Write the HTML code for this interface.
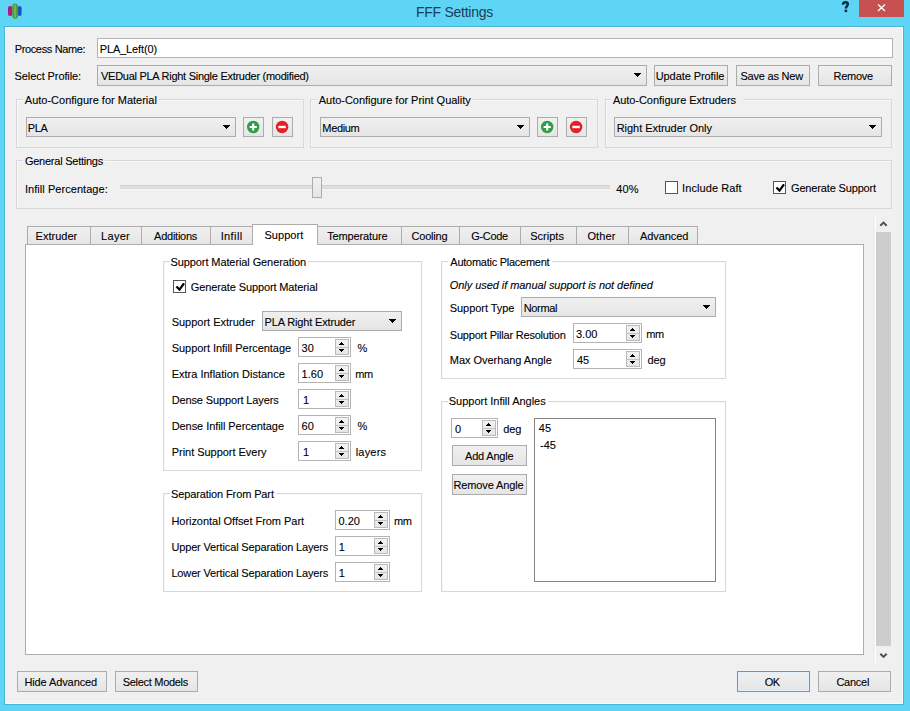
<!DOCTYPE html><html><head><meta charset="utf-8"><style>
*{box-sizing:border-box}
html,body{margin:0;padding:0}
body{width:910px;height:711px;position:relative;overflow:hidden;background:#5fd5f6;font-family:"Liberation Sans", sans-serif;font-size:11px;color:#000}
.t{position:absolute;white-space:nowrap;line-height:13px;font-size:11px;z-index:3;-webkit-text-stroke:0.1px #000}
.client{position:absolute;left:5px;top:27px;width:898px;height:677px;background:#f0f0f0;box-shadow:0 0 0 1px #4bb7d6,inset 1px 1px 0 #fbfdfd,inset -1px -1px 0 #fbfdfd}
.icon{position:absolute;left:8px;top:3px;width:14px;height:16px}
.title{position:absolute;left:0;width:910px;top:3.5px;text-align:center;font-size:14px;letter-spacing:-0.25px;line-height:16px;color:#1b3d57;text-indent:-1px}
.help{position:absolute;left:842px;top:1px;font-weight:bold;font-size:12px;color:#0d2b45}
.close{position:absolute;left:859px;top:0;width:45px;height:17px;background:#c75050}
.close svg{position:absolute;left:0;top:0}
.edit{position:absolute;background:#fff;border:1px solid #b4b4b4}
.combo{position:absolute;border:1px solid #acacac;background:linear-gradient(#f0f0f0,#e5e5e5)}
.btn{position:absolute;border:1px solid #acacac;background:linear-gradient(#f0f0f0,#e5e5e5)}
.btn.def{border-color:#5b9bd5;box-shadow:inset 0 0 0 1px #e3f0fb}
.spin{position:absolute;background:#fff;border:1px solid #b4b4b4}
.sb{position:absolute;border:1px solid #bababa;background:linear-gradient(#f2f2f2,#e6e6e6);top:1px}
.sdiv{position:absolute;left:0;right:0;height:1px;background:#c2c2c2}
.grp{position:absolute;border:1px solid #d8d8d8;box-shadow:inset 1px 1px 0 #f9f9f9}
.cb{position:absolute;width:13px;height:13px;border:1px solid #555;background:#fff}
.groove{position:absolute;border-top:1px solid #d2d2d2;border-bottom:1px solid #d8d8d8;background:#dfdfdf;box-shadow:0 1px 0 #f8f8f8}
.handle{position:absolute;border:1px solid #acacac;background:linear-gradient(#f0f0f0,#e5e5e5)}
.pane{position:absolute;background:#fff;border:1px solid #adadad}
.tab{position:absolute;border:1px solid #acacac;border-bottom:none;background:linear-gradient(#f0f0f0,#e5e5e5)}
.tabsel{position:absolute;border:1px solid #acacac;border-bottom:none;background:#fff;z-index:2}
.ar{position:absolute;shape-rendering:crispEdges;fill:#000}
.list{position:absolute;background:#fff;border:1px solid #858585}
</style></head><body><svg style="position:absolute;left:0;top:0" width="26" height="22"><rect x="8" y="6" width="4.3" height="10" rx="2" fill="#b81480"/><rect x="17.6" y="6" width="4" height="10" rx="2" fill="#1456c0"/><rect x="12.3" y="3.5" width="5.6" height="15.2" rx="2.6" fill="#4c9c3c"/><rect x="14" y="4.5" width="2" height="13" fill="#6ab848"/></svg>
<div class="title">FFF Settings</div>
<svg style="position:absolute;left:840px;top:0" width="12" height="14"><path d="M3.1 4.8 C3.1 3 4.2 2.3 5.4 2.3 C6.8 2.3 7.8 3.1 7.8 4.3 C7.8 6.2 5.9 6.3 5.9 8.6" stroke="#0d2b45" stroke-width="2.5" fill="none"/><rect x="4.6" y="9.6" width="2.6" height="2.5" fill="#0d2b45"/></svg>
<div class="close"><svg width="45" height="17"><path d="M19 4.5 L26 11 M26 4.5 L19 11" stroke="#fff" stroke-width="1.4"/></svg></div>
<div class="client"></div>
<div class="edit" style="left:97px;top:38px;width:796px;height:20px;"></div>
<div class="combo" style="left:97px;top:65px;width:550px;height:21px;"><svg class="ar" style="left:536px;top:7px" width="7" height="4"><path d="M0 0h7v1h-7zM1 1h5v1h-5zM2 2h3v1h-3zM3 3h1v1h-1z"/></svg></div>
<div class="btn" style="left:654px;top:65px;width:74px;height:21px;"></div>
<div class="btn" style="left:736px;top:65px;width:74px;height:21px;"></div>
<div class="btn" style="left:818px;top:65px;width:74px;height:21px;"></div>
<div class="grp" style="left:16px;top:99px;width:288px;height:49px;"></div>
<div style="position:absolute;left:23px;top:98px;width:136px;height:3px;background:#f0f0f0"></div>
<div class="combo" style="left:26px;top:117px;width:210px;height:20px;"><svg class="ar" style="left:196px;top:7px" width="7" height="4"><path d="M0 0h7v1h-7zM1 1h5v1h-5zM2 2h3v1h-3zM3 3h1v1h-1z"/></svg></div>
<div class="btn" style="left:243px;top:117px;width:21px;height:20px;"><svg width="21" height="20" style="position:absolute;left:-1px;top:-1px"><circle cx="10.2" cy="10" r="6.2" fill="#2e9e48"/><path d="M10.2 6.4 V13.6 M6.6 10 H13.8" stroke="#fff" stroke-width="2.2"/></svg></div>
<div class="btn" style="left:272px;top:117px;width:21px;height:20px;"><svg width="21" height="20" style="position:absolute;left:-1px;top:-1px"><circle cx="10.1" cy="10" r="6.2" fill="#e0202a"/><path d="M6.4 10 H13.8" stroke="#fff" stroke-width="2.4"/></svg></div>
<div class="grp" style="left:310px;top:99px;width:288px;height:49px;"></div>
<div style="position:absolute;left:317px;top:98px;width:156px;height:3px;background:#f0f0f0"></div>
<div class="combo" style="left:320px;top:117px;width:210px;height:20px;"><svg class="ar" style="left:196px;top:7px" width="7" height="4"><path d="M0 0h7v1h-7zM1 1h5v1h-5zM2 2h3v1h-3zM3 3h1v1h-1z"/></svg></div>
<div class="btn" style="left:537px;top:117px;width:21px;height:20px;"><svg width="21" height="20" style="position:absolute;left:-1px;top:-1px"><circle cx="10.2" cy="10" r="6.2" fill="#2e9e48"/><path d="M10.2 6.4 V13.6 M6.6 10 H13.8" stroke="#fff" stroke-width="2.2"/></svg></div>
<div class="btn" style="left:566px;top:117px;width:21px;height:20px;"><svg width="21" height="20" style="position:absolute;left:-1px;top:-1px"><circle cx="10.1" cy="10" r="6.2" fill="#e0202a"/><path d="M6.4 10 H13.8" stroke="#fff" stroke-width="2.4"/></svg></div>
<div class="grp" style="left:605px;top:99px;width:287px;height:49px;"></div>
<div style="position:absolute;left:611px;top:98px;width:132px;height:3px;background:#f0f0f0"></div>
<div class="combo" style="left:614px;top:117px;width:268px;height:20px;"><svg class="ar" style="left:254px;top:7px" width="7" height="4"><path d="M0 0h7v1h-7zM1 1h5v1h-5zM2 2h3v1h-3zM3 3h1v1h-1z"/></svg></div>
<div class="grp" style="left:16px;top:160px;width:876px;height:49px;"></div>
<div style="position:absolute;left:23px;top:159px;width:82px;height:3px;background:#f0f0f0"></div>
<div class="groove" style="left:120px;top:185px;width:490px;height:4px"></div>
<div class="handle" style="left:312px;top:177px;width:10px;height:21px"></div>
<div class="cb" style="left:665px;top:181px"></div>
<div class="cb" style="left:773px;top:181px"><svg width="13" height="13" style="position:absolute;left:-1px;top:-1px"><path d="M3.4 6.5 L6.5 9.6 L11 3.4" stroke="#000" stroke-width="2.3" fill="none"/></svg></div>
<div class="pane" style="left:25px;top:244px;width:839px;height:411px"></div>
<div class="tab" style="left:27px;top:226px;width:64px;height:18px"></div>
<div class="tab" style="left:90px;top:226px;width:52px;height:18px"></div>
<div class="tab" style="left:141px;top:226px;width:70px;height:18px"></div>
<div class="tab" style="left:210px;top:226px;width:43px;height:18px"></div>
<div class="tabsel" style="left:252px;top:224px;width:66px;height:21px"></div>
<div class="tab" style="left:317px;top:226px;width:85px;height:18px"></div>
<div class="tab" style="left:401px;top:226px;width:59px;height:18px"></div>
<div class="tab" style="left:459px;top:226px;width:62px;height:18px"></div>
<div class="tab" style="left:520px;top:226px;width:57px;height:18px"></div>
<div class="tab" style="left:576px;top:226px;width:53px;height:18px"></div>
<div class="tab" style="left:628px;top:226px;width:70px;height:18px"></div>
<div class="grp" style="left:163px;top:261px;width:259px;height:210px;"></div>
<div style="position:absolute;left:170px;top:260px;width:138px;height:3px;background:#fff"></div>
<div class="cb" style="left:173px;top:280px"><svg width="13" height="13" style="position:absolute;left:-1px;top:-1px"><path d="M3.4 6.5 L6.5 9.6 L11 3.4" stroke="#000" stroke-width="2.3" fill="none"/></svg></div>
<div class="combo" style="left:262px;top:311px;width:140px;height:20px;"><svg class="ar" style="left:126px;top:7px" width="7" height="4"><path d="M0 0h7v1h-7zM1 1h5v1h-5zM2 2h3v1h-3zM3 3h1v1h-1z"/></svg></div>
<div class="spin" style="left:298px;top:337px;width:53px;height:20px;"><div class="sb" style="left:36px;top:1px;width:14px;height:16px"><div class="sdiv" style="top:7px"></div><svg class="ar" style="left:3px;top:2px" width="5" height="3"><path d="M2 0h1v1h-1zM1 1h3v1h-3zM0 2h5v1h-5z"/></svg><svg class="ar" style="left:3px;top:9px" width="5" height="3"><path d="M0 0h5v1h-5zM1 1h3v1h-3zM2 2h1v1h-1z"/></svg></div></div>
<div class="spin" style="left:298px;top:363px;width:53px;height:20px;"><div class="sb" style="left:36px;top:1px;width:14px;height:16px"><div class="sdiv" style="top:7px"></div><svg class="ar" style="left:3px;top:2px" width="5" height="3"><path d="M2 0h1v1h-1zM1 1h3v1h-3zM0 2h5v1h-5z"/></svg><svg class="ar" style="left:3px;top:9px" width="5" height="3"><path d="M0 0h5v1h-5zM1 1h3v1h-3zM2 2h1v1h-1z"/></svg></div></div>
<div class="spin" style="left:298px;top:389px;width:53px;height:20px;"><div class="sb" style="left:36px;top:1px;width:14px;height:16px"><div class="sdiv" style="top:7px"></div><svg class="ar" style="left:3px;top:2px" width="5" height="3"><path d="M2 0h1v1h-1zM1 1h3v1h-3zM0 2h5v1h-5z"/></svg><svg class="ar" style="left:3px;top:9px" width="5" height="3"><path d="M0 0h5v1h-5zM1 1h3v1h-3zM2 2h1v1h-1z"/></svg></div></div>
<div class="spin" style="left:298px;top:415px;width:53px;height:20px;"><div class="sb" style="left:36px;top:1px;width:14px;height:16px"><div class="sdiv" style="top:7px"></div><svg class="ar" style="left:3px;top:2px" width="5" height="3"><path d="M2 0h1v1h-1zM1 1h3v1h-3zM0 2h5v1h-5z"/></svg><svg class="ar" style="left:3px;top:9px" width="5" height="3"><path d="M0 0h5v1h-5zM1 1h3v1h-3zM2 2h1v1h-1z"/></svg></div></div>
<div class="spin" style="left:298px;top:441px;width:53px;height:20px;"><div class="sb" style="left:36px;top:1px;width:14px;height:16px"><div class="sdiv" style="top:7px"></div><svg class="ar" style="left:3px;top:2px" width="5" height="3"><path d="M2 0h1v1h-1zM1 1h3v1h-3zM0 2h5v1h-5z"/></svg><svg class="ar" style="left:3px;top:9px" width="5" height="3"><path d="M0 0h5v1h-5zM1 1h3v1h-3zM2 2h1v1h-1z"/></svg></div></div>
<div class="grp" style="left:163px;top:493px;width:259px;height:99px;"></div>
<div style="position:absolute;left:170px;top:492px;width:106px;height:3px;background:#fff"></div>
<div class="spin" style="left:335px;top:510px;width:55px;height:20px;"><div class="sb" style="left:38px;top:1px;width:14px;height:16px"><div class="sdiv" style="top:7px"></div><svg class="ar" style="left:3px;top:2px" width="5" height="3"><path d="M2 0h1v1h-1zM1 1h3v1h-3zM0 2h5v1h-5z"/></svg><svg class="ar" style="left:3px;top:9px" width="5" height="3"><path d="M0 0h5v1h-5zM1 1h3v1h-3zM2 2h1v1h-1z"/></svg></div></div>
<div class="spin" style="left:335px;top:536px;width:55px;height:20px;"><div class="sb" style="left:38px;top:1px;width:14px;height:16px"><div class="sdiv" style="top:7px"></div><svg class="ar" style="left:3px;top:2px" width="5" height="3"><path d="M2 0h1v1h-1zM1 1h3v1h-3zM0 2h5v1h-5z"/></svg><svg class="ar" style="left:3px;top:9px" width="5" height="3"><path d="M0 0h5v1h-5zM1 1h3v1h-3zM2 2h1v1h-1z"/></svg></div></div>
<div class="spin" style="left:335px;top:562px;width:55px;height:20px;"><div class="sb" style="left:38px;top:1px;width:14px;height:16px"><div class="sdiv" style="top:7px"></div><svg class="ar" style="left:3px;top:2px" width="5" height="3"><path d="M2 0h1v1h-1zM1 1h3v1h-3zM0 2h5v1h-5z"/></svg><svg class="ar" style="left:3px;top:9px" width="5" height="3"><path d="M0 0h5v1h-5zM1 1h3v1h-3zM2 2h1v1h-1z"/></svg></div></div>
<div class="grp" style="left:441px;top:261px;width:285px;height:118px;"></div>
<div style="position:absolute;left:448px;top:260px;width:104px;height:3px;background:#fff"></div>
<div class="combo" style="left:521px;top:297px;width:195px;height:20px;"><svg class="ar" style="left:181px;top:7px" width="7" height="4"><path d="M0 0h7v1h-7zM1 1h5v1h-5zM2 2h3v1h-3zM3 3h1v1h-1z"/></svg></div>
<div class="spin" style="left:573px;top:323px;width:69px;height:20px;"><div class="sb" style="left:52px;top:1px;width:14px;height:16px"><div class="sdiv" style="top:7px"></div><svg class="ar" style="left:3px;top:2px" width="5" height="3"><path d="M2 0h1v1h-1zM1 1h3v1h-3zM0 2h5v1h-5z"/></svg><svg class="ar" style="left:3px;top:9px" width="5" height="3"><path d="M0 0h5v1h-5zM1 1h3v1h-3zM2 2h1v1h-1z"/></svg></div></div>
<div class="spin" style="left:573px;top:349px;width:69px;height:20px;"><div class="sb" style="left:52px;top:1px;width:14px;height:16px"><div class="sdiv" style="top:7px"></div><svg class="ar" style="left:3px;top:2px" width="5" height="3"><path d="M2 0h1v1h-1zM1 1h3v1h-3zM0 2h5v1h-5z"/></svg><svg class="ar" style="left:3px;top:9px" width="5" height="3"><path d="M0 0h5v1h-5zM1 1h3v1h-3zM2 2h1v1h-1z"/></svg></div></div>
<div class="grp" style="left:441px;top:401px;width:285px;height:191px;"></div>
<div style="position:absolute;left:448px;top:400px;width:100px;height:3px;background:#fff"></div>
<div class="spin" style="left:451px;top:418px;width:47px;height:20px;"><div class="sb" style="left:30px;top:1px;width:14px;height:16px"><div class="sdiv" style="top:7px"></div><svg class="ar" style="left:3px;top:2px" width="5" height="3"><path d="M2 0h1v1h-1zM1 1h3v1h-3zM0 2h5v1h-5z"/></svg><svg class="ar" style="left:3px;top:9px" width="5" height="3"><path d="M0 0h5v1h-5zM1 1h3v1h-3zM2 2h1v1h-1z"/></svg></div></div>
<div class="btn" style="left:452px;top:445px;width:75px;height:21px;"></div>
<div class="btn" style="left:452px;top:474px;width:75px;height:21px;"></div>
<div class="list" style="left:534px;top:418px;width:182px;height:164px"></div>
<div style="position:absolute;left:875px;top:216px;width:1px;height:448px;background:#fdfdfd"></div>
<div style="position:absolute;left:876px;top:232px;width:15px;height:414px;background:#cdcdcd"></div>
<svg style="position:absolute;left:879px;top:220px" width="10" height="8"><path d="M1.3 5.8 L4.5 2.6 L7.7 5.8" stroke="#505050" stroke-width="2" fill="none"/></svg>
<svg style="position:absolute;left:879px;top:652px" width="10" height="8"><path d="M1.3 1.7 L4.5 4.9 L7.7 1.7" stroke="#505050" stroke-width="2" fill="none"/></svg>
<div class="btn" style="left:17px;top:671px;width:90px;height:21px;"></div>
<div class="btn" style="left:115px;top:671px;width:83px;height:21px;"></div>
<div class="btn def" style="left:737px;top:671px;width:73px;height:21px;"></div>
<div class="btn" style="left:818px;top:671px;width:73px;height:21px;"></div>
<div class="t" style="left:14.65px;top:42.7px;letter-spacing:-0.350px;">Process Name:</div>
<div class="t" style="left:99.70px;top:42.7px;letter-spacing:-0.120px;">PLA_Left(0)</div>
<div class="t" style="left:14.60px;top:69.7px;letter-spacing:-0.093px;">Select Profile:</div>
<div class="t" style="left:101.00px;top:70.2px;letter-spacing:-0.274px;">VEDual PLA Right Single Extruder (modified)</div>
<div class="t" style="left:655.70px;top:69.7px;letter-spacing:-0.077px;">Update Profile</div>
<div class="t" style="left:740.40px;top:69.7px;letter-spacing:-0.200px;">Save as New</div>
<div class="t" style="left:833.60px;top:69.7px;letter-spacing:-0.300px;">Remove</div>
<div class="t" style="left:24.80px;top:93.7px;">Auto-Configure for Material</div>
<div class="t" style="left:27.70px;top:122.2px;letter-spacing:-0.350px;">PLA</div>
<div class="t" style="left:318.80px;top:93.7px;letter-spacing:-0.032px;">Auto-Configure for Print Quality</div>
<div class="t" style="left:322.32px;top:122.2px;letter-spacing:-0.350px;">Medium</div>
<div class="t" style="left:612.90px;top:93.7px;letter-spacing:-0.043px;">Auto-Configure Extruders</div>
<div class="t" style="left:616.70px;top:122.2px;letter-spacing:-0.044px;">Right Extruder Only</div>
<div class="t" style="left:24.90px;top:155.2px;letter-spacing:-0.240px;">General Settings</div>
<div class="t" style="left:25.00px;top:182.7px;letter-spacing:0.047px;">Infill Percentage:</div>
<div class="t" style="left:616.30px;top:182.7px;letter-spacing:0.100px;">40%</div>
<div class="t" style="left:682.10px;top:182.2px;letter-spacing:0.073px;">Include Raft</div>
<div class="t" style="left:791.00px;top:182.2px;letter-spacing:-0.153px;">Generate Support</div>
<div class="t" style="left:35.60px;top:229.7px;letter-spacing:0.014px;">Extruder</div>
<div class="t" style="left:101.10px;top:229.7px;letter-spacing:0.275px;">Layer</div>
<div class="t" style="left:154.10px;top:229.7px;letter-spacing:-0.250px;">Additions</div>
<div class="t" style="left:220.70px;top:229.7px;letter-spacing:0.380px;">Infill</div>
<div class="t" style="left:264.50px;top:228.7px;letter-spacing:0.033px;z-index:3">Support</div>
<div class="t" style="left:327.20px;top:229.7px;letter-spacing:-0.130px;">Temperature</div>
<div class="t" style="left:411.50px;top:229.7px;letter-spacing:-0.200px;">Cooling</div>
<div class="t" style="left:471.32px;top:229.7px;letter-spacing:-0.350px;">G-Code</div>
<div class="t" style="left:530.20px;top:229.7px;letter-spacing:0.017px;">Scripts</div>
<div class="t" style="left:587.40px;top:229.7px;letter-spacing:0.150px;">Other</div>
<div class="t" style="left:640.10px;top:229.7px;letter-spacing:-0.100px;">Advanced</div>
<div class="t" style="left:170.50px;top:255.7px;letter-spacing:-0.096px;">Support Material Generation</div>
<div class="t" style="left:190.80px;top:280.7px;letter-spacing:-0.117px;">Generate Support Material</div>
<div class="t" style="left:171.70px;top:316.2px;letter-spacing:-0.013px;">Support Extruder</div>
<div class="t" style="left:264.60px;top:316.2px;letter-spacing:-0.159px;">PLA Right Extruder</div>
<div class="t" style="left:171.70px;top:341.7px;letter-spacing:-0.042px;">Support Infill Percentage</div>
<div class="t" style="left:301.60px;top:341.7px;">30</div>
<div class="t" style="left:357.50px;top:341.7px;">%</div>
<div class="t" style="left:171.70px;top:367.7px;">Extra Inflation Distance</div>
<div class="t" style="left:301.60px;top:367.7px;">1.60</div>
<div class="t" style="left:355.27px;top:367.7px;letter-spacing:-0.350px;">mm</div>
<div class="t" style="left:171.70px;top:393.7px;letter-spacing:-0.126px;">Dense Support Layers</div>
<div class="t" style="left:302.90px;top:393.7px;">1</div>
<div class="t" style="left:171.70px;top:419.7px;letter-spacing:-0.064px;">Dense Infill Percentage</div>
<div class="t" style="left:301.60px;top:419.7px;">60</div>
<div class="t" style="left:357.50px;top:419.7px;">%</div>
<div class="t" style="left:171.70px;top:445.7px;letter-spacing:-0.028px;">Print Support Every</div>
<div class="t" style="left:302.90px;top:445.7px;">1</div>
<div class="t" style="left:355.70px;top:445.7px;letter-spacing:0.200px;">layers</div>
<div class="t" style="left:171.10px;top:488.2px;letter-spacing:-0.121px;">Separation From Part</div>
<div class="t" style="left:171.40px;top:514.7px;letter-spacing:-0.038px;">Horizontal Offset From Part</div>
<div class="t" style="left:338.50px;top:514.7px;">0.20</div>
<div class="t" style="left:393.93px;top:514.7px;letter-spacing:-0.350px;">mm</div>
<div class="t" style="left:171.40px;top:540.7px;letter-spacing:-0.145px;">Upper Vertical Separation Layers</div>
<div class="t" style="left:338.80px;top:540.7px;">1</div>
<div class="t" style="left:171.40px;top:566.7px;letter-spacing:-0.145px;">Lower Vertical Separation Layers</div>
<div class="t" style="left:338.80px;top:566.7px;">1</div>
<div class="t" style="left:450.30px;top:255.7px;letter-spacing:-0.256px;">Automatic Placement</div>
<div class="t" style="left:449.80px;top:279.2px;letter-spacing:-0.059px;font-style:italic">Only used if manual support is not defined</div>
<div class="t" style="left:449.80px;top:302.2px;letter-spacing:-0.064px;">Support Type</div>
<div class="t" style="left:523.70px;top:302.2px;letter-spacing:-0.320px;">Normal</div>
<div class="t" style="left:449.80px;top:328.7px;letter-spacing:-0.208px;">Support Pillar Resolution</div>
<div class="t" style="left:576.00px;top:328.2px;">3.00</div>
<div class="t" style="left:646.23px;top:328.2px;letter-spacing:-0.350px;">mm</div>
<div class="t" style="left:449.80px;top:353.7px;letter-spacing:-0.041px;">Max Overhang Angle</div>
<div class="t" style="left:577.00px;top:354.2px;">45</div>
<div class="t" style="left:647.60px;top:353.7px;letter-spacing:-0.150px;">deg</div>
<div class="t" style="left:448.80px;top:395.2px;letter-spacing:-0.015px;">Support Infill Angles</div>
<div class="t" style="left:454.90px;top:422.7px;">0</div>
<div class="t" style="left:503.30px;top:422.7px;letter-spacing:-0.150px;">deg</div>
<div class="t" style="left:465.00px;top:450.2px;letter-spacing:-0.188px;">Add Angle</div>
<div class="t" style="left:453.40px;top:479.2px;letter-spacing:-0.118px;">Remove Angle</div>
<div class="t" style="left:538.80px;top:422.2px;">45</div>
<div class="t" style="left:540.00px;top:439.2px;">-45</div>
<div class="t" style="left:24.40px;top:675.7px;letter-spacing:-0.100px;">Hide Advanced</div>
<div class="t" style="left:122.70px;top:675.7px;letter-spacing:-0.292px;">Select Models</div>
<div class="t" style="left:764.67px;top:675.7px;letter-spacing:-0.350px;">OK</div>
<div class="t" style="left:836.40px;top:675.7px;letter-spacing:-0.240px;">Cancel</div></body></html>
